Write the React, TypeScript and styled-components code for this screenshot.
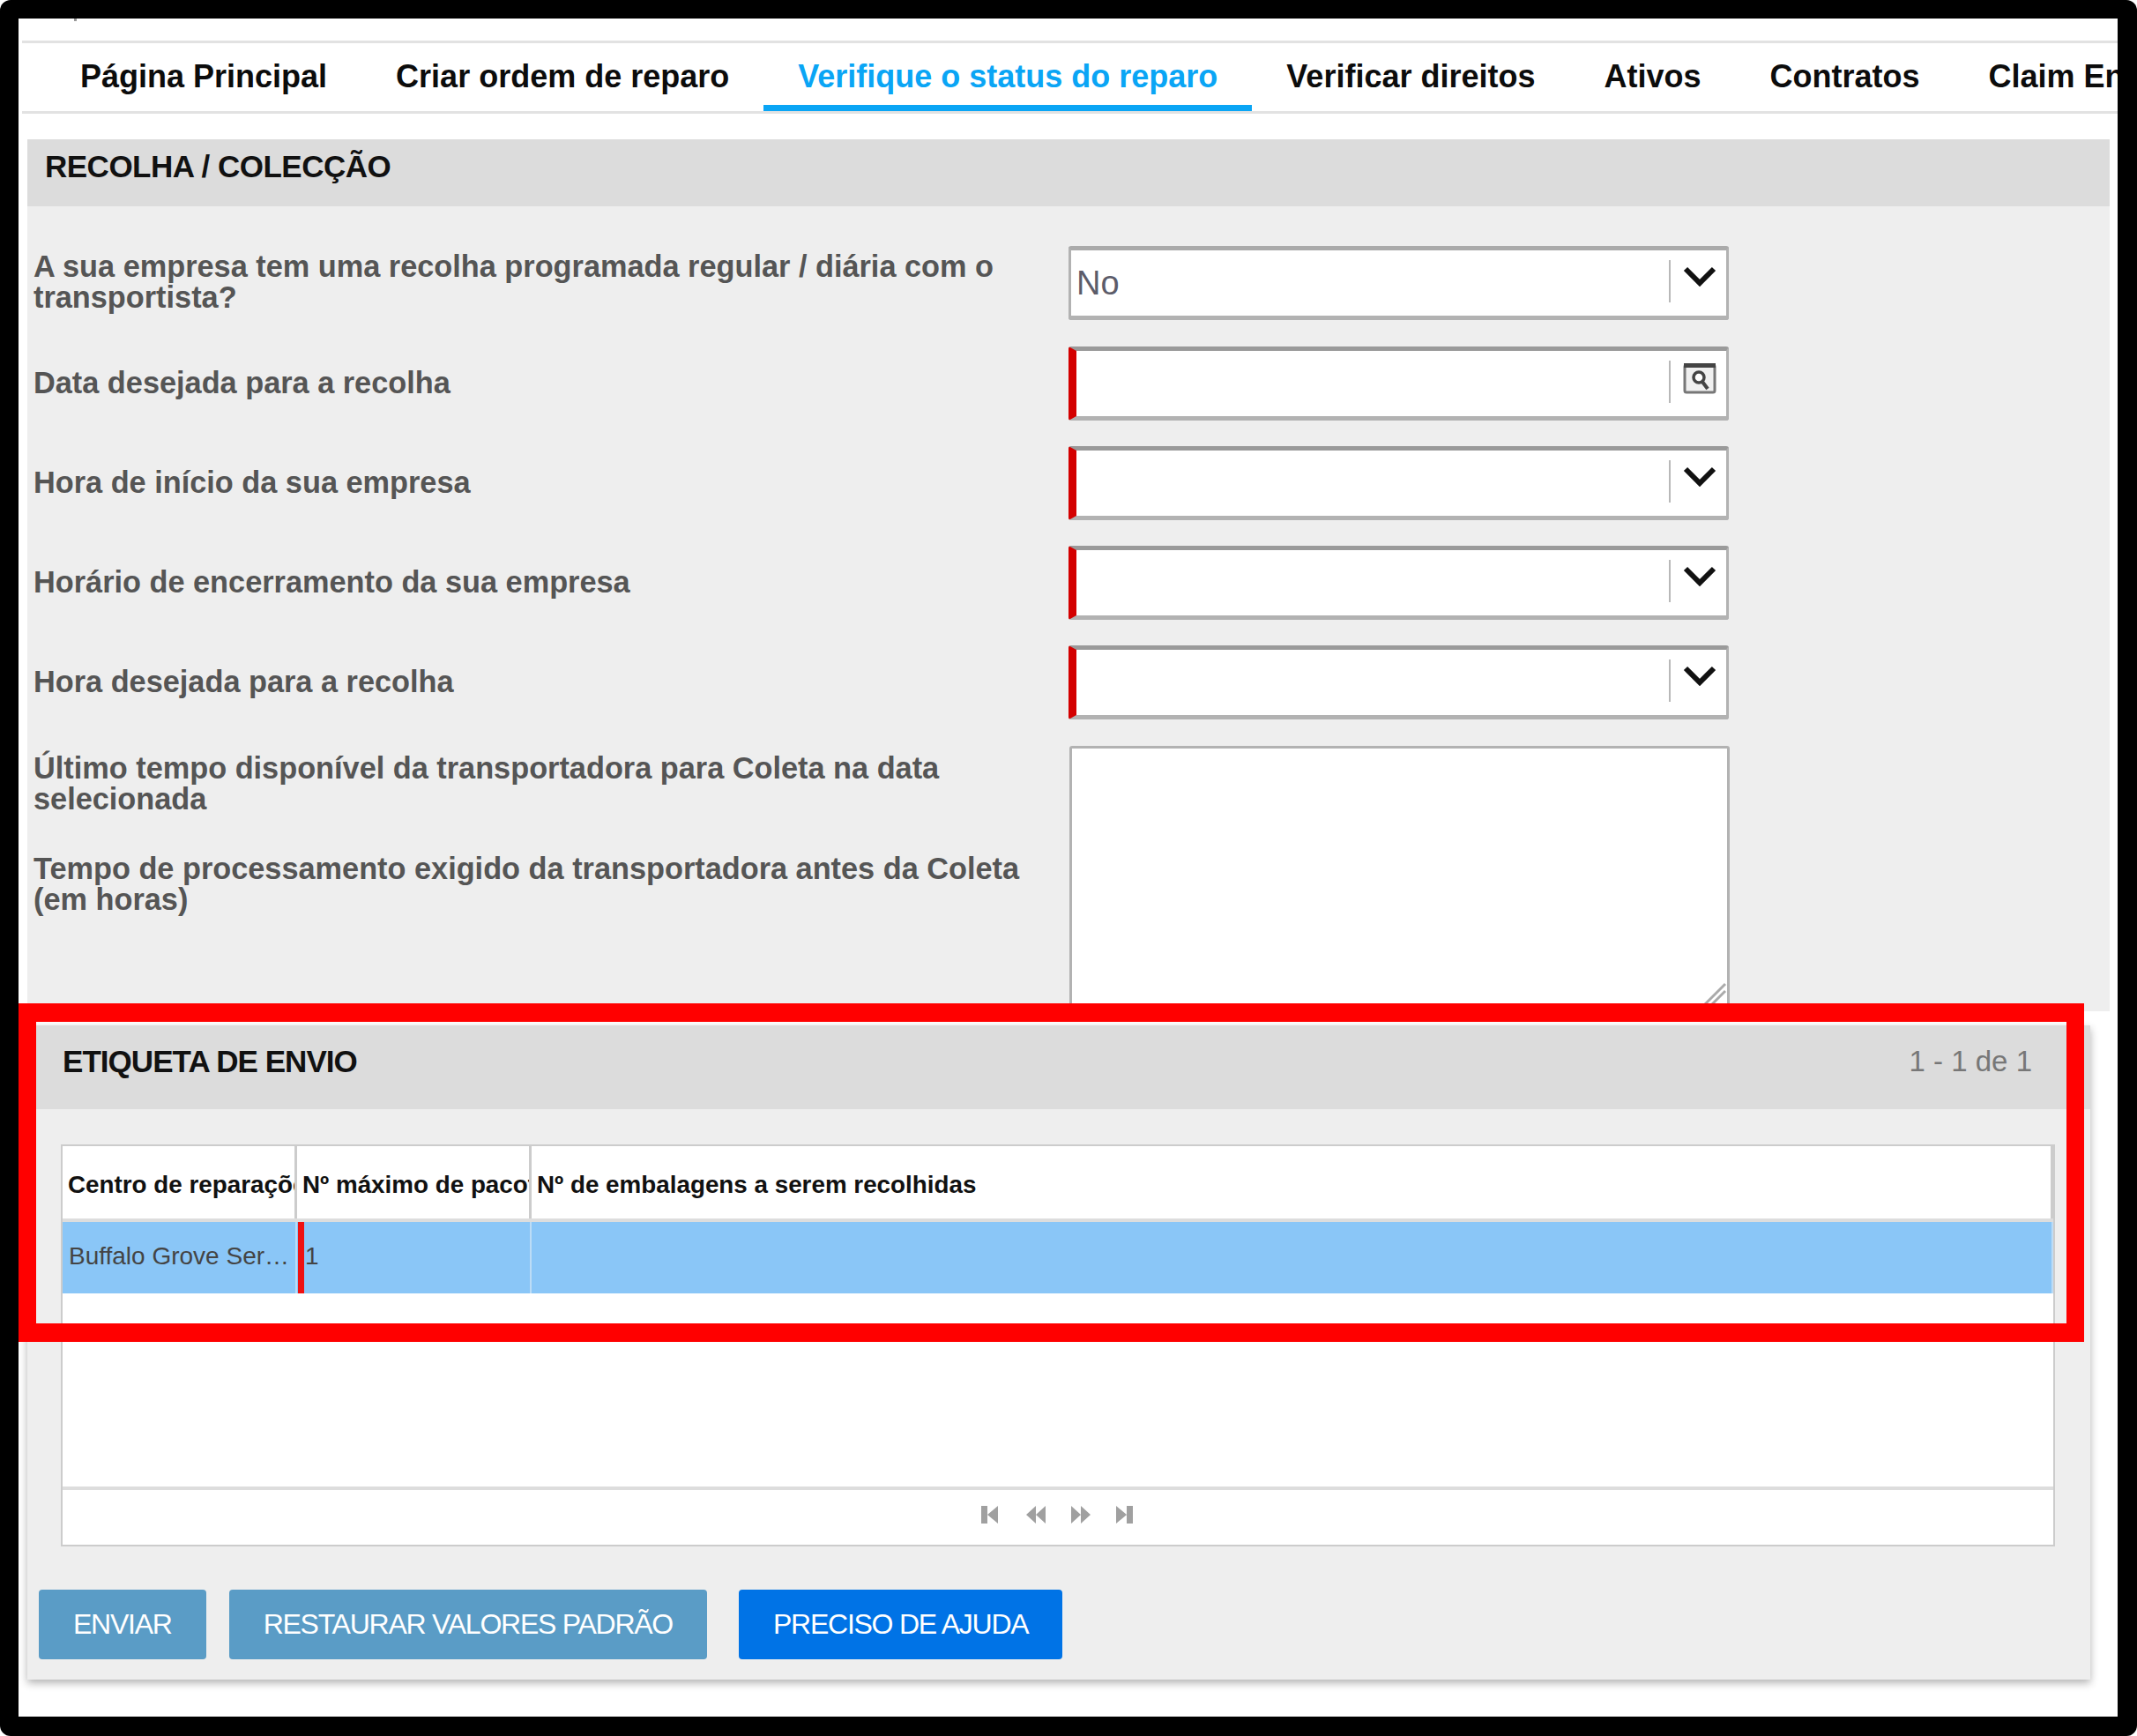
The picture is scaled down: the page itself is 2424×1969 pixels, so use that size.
import styled, { createGlobalStyle } from 'styled-components';

const tabs = [
  'Página Principal',
  'Criar ordem de reparo',
  'Verifique o status do reparo',
  'Verificar direitos',
  'Ativos',
  'Contratos',
  'Claim Entry',
];

const Chevron = () => (
  <svg width="38" height="24" viewBox="0 0 38 24">
    <path d="M3 4 L19 20 L35 4" fill="none" stroke="#111" strokeWidth="6" />
  </svg>
);

const CalendarSearch = () => (
  <CalendarSvg width="38" height="36" viewBox="0 0 38 36">
    <rect x="2" y="3" width="34" height="31" rx="2" fill="#f0f0f0" stroke="#777" strokeWidth="3" />
    <rect x="1" y="1" width="36" height="5" fill="#444" />
    <circle cx="18" cy="17" r="6" fill="#fff" stroke="#444" strokeWidth="3.5" />
    <path d="M22 22 L28 30" stroke="#444" strokeWidth="4" />
  </CalendarSvg>
);

const PagerIcon = ({ kind }: { kind: 'first' | 'prev' | 'next' | 'last' }) => {
  const paths = {
    first: 'M1 3 H8 V23 H1 Z M20 3 V23 L8 13 Z',
    prev: 'M12 3 V23 L1 13 Z M23 3 V23 L12 13 Z',
    next: 'M1 3 V23 L12 13 Z M12 3 V23 L23 13 Z',
    last: 'M1 3 V23 L13 13 Z M13 3 H20 V23 H13 Z',
  };
  return (
    <svg width="24" height="26" viewBox="0 0 24 26">
      <path d={paths[kind]} fill="#a0a0a0" />
    </svg>
  );
};

const App = () => (
  <>
    <GlobalStyle />
    <Frame>
      <Screen>
        <TinyMark />
        <Nav>
          {tabs.map((t, i) => (
            <Tab key={t} $active={i === 2}>
              {t}
            </Tab>
          ))}
        </Nav>

        <FirstSection>
          <SectionHeader>
            <SectionTitle>RECOLHA / COLECÇÃO</SectionTitle>
          </SectionHeader>
          <FormBody>
            <Row>
              <Label>A sua empresa tem uma recolha programada regular / diária com o transportista?</Label>
              <Control>
                <Value>No</Value>
                <Divider />
                <IconSlot>
                  <Chevron />
                </IconSlot>
              </Control>
            </Row>
            <Row>
              <Label>Data desejada para a recolha</Label>
              <Control $required>
                <Value />
                <Divider />
                <IconSlot>
                  <CalendarSearch />
                </IconSlot>
              </Control>
            </Row>
            <Row>
              <Label>Hora de início da sua empresa</Label>
              <Control $required>
                <Value />
                <Divider />
                <IconSlot>
                  <Chevron />
                </IconSlot>
              </Control>
            </Row>
            <Row>
              <Label>Horário de encerramento da sua empresa</Label>
              <Control $required>
                <Value />
                <Divider />
                <IconSlot>
                  <Chevron />
                </IconSlot>
              </Control>
            </Row>
            <Row>
              <Label>Hora desejada para a recolha</Label>
              <Control $required>
                <Value />
                <Divider />
                <IconSlot>
                  <Chevron />
                </IconSlot>
              </Control>
            </Row>
            <TextRow>
              <LabelStack>
                <Label>Último tempo disponível da transportadora para Coleta na data selecionada</Label>
                <Label>Tempo de processamento exigido da transportadora antes da Coleta (em horas)</Label>
              </LabelStack>
              <TextBox>
                <Grip width="30" height="30" viewBox="0 0 30 30">
                  <path d="M2 28 L28 2 M10 28 L28 10" stroke="#aaa" strokeWidth="3" />
                </Grip>
              </TextBox>
            </TextRow>
          </FormBody>
        </FirstSection>

        <SecondSection>
          <ShippingHeader>
            <ShippingTitle>ETIQUETA DE ENVIO</ShippingTitle>
            <Count>1 - 1 de 1</Count>
          </ShippingHeader>
          <DataGrid>
            <HeadRow>
              <HeadCell>Centro de reparações</HeadCell>
              <HeadCell>Nº máximo de pacotes</HeadCell>
              <HeadCell>Nº de embalagens a serem recolhidas</HeadCell>
            </HeadRow>
            <DataRow>
              <DataCell>Buffalo Grove Service Center</DataCell>
              <DataCell $required>1</DataCell>
              <DataCell />
            </DataRow>
            <EmptyArea />
            <Pager>
              <PagerIcon kind="first" />
              <PagerIcon kind="prev" />
              <PagerIcon kind="next" />
              <PagerIcon kind="last" />
            </Pager>
          </DataGrid>
          <Toolbar>
            <Button>ENVIAR</Button>
            <Button>RESTAURAR VALORES PADRÃO</Button>
            <HelpButton>PRECISO DE AJUDA</HelpButton>
          </Toolbar>
        </SecondSection>

        <Highlight />
      </Screen>
    </Frame>
  </>
);

const GlobalStyle = createGlobalStyle`
  html, body {
    margin: 0;
    padding: 0;
    background: #ffffff;
  }
  * {
    box-sizing: border-box;
  }
`;

const Frame = styled.div`
  width: 2424px;
  height: 1969px;
  padding: 21px 22px 22px 21px;
  background: #000000;
  border-radius: 12px;
  font-family: 'Liberation Sans', Arial, sans-serif;
  overflow: hidden;
`;

const Screen = styled.div`
  position: relative;
  height: 100%;
  background: #ffffff;
  overflow: hidden;
  padding-top: 25px;
  display: flex;
  flex-direction: column;
`;

const TinyMark = styled.div`
  position: absolute;
  left: 63px;
  top: 0;
  width: 3px;
  height: 3px;
  background: #999999;
`;

const Nav = styled.nav`
  display: flex;
  flex: none;
  height: 83px;
  margin-left: 4px;
  padding-left: 27px;
  border-top: 3px solid #e2e2e2;
  border-bottom: 3px solid #e2e2e2;
  overflow: hidden;
`;

const Tab = styled.div<{ $active?: boolean }>`
  flex: none;
  display: flex;
  align-items: center;
  height: 77px;
  padding: 5px 39px 0;
  font-size: 36px;
  font-weight: 700;
  white-space: nowrap;
  color: ${(p) => (p.$active ? '#0aa5f5' : '#0c0c0c')};
  border-bottom: 7px solid ${(p) => (p.$active ? '#0aa5f5' : 'transparent')};
`;

const FirstSection = styled.section`
  flex: none;
  height: 989px;
  margin: 29px 9px 0 10px;
  background: #eeeeee;
  overflow: hidden;
`;

const SectionHeader = styled.header`
  display: flex;
  align-items: center;
  justify-content: space-between;
  height: 76px;
  padding: 0 20px 15px;
  background: #dcdcdc;
`;

const SectionTitle = styled.h2`
  margin: 0;
  font-size: 35px;
  font-weight: 700;
  letter-spacing: -0.5px;
  color: #111111;
`;

const ShippingTitle = styled(SectionTitle)`
  letter-spacing: -0.95px;
`;

const FormBody = styled.div`
  padding: 45px 0 0 7px;
`;

const Row = styled.div`
  display: flex;
  align-items: center;
  height: 84px;
  margin-bottom: 29px;
  &:first-child,
  &:nth-child(5) {
    margin-bottom: 30px;
  }
`;

const Label = styled.div`
  font-size: 34.3px;
  font-weight: 700;
  line-height: 35px;
  padding-bottom: 2px;
  color: #555555;
`;

const LabelStack = styled.div`
  display: flex;
  flex-direction: column;
  gap: 42px;
  width: 1135px;
  padding-top: 8px;
`;

const Control = styled.div<{ $required?: boolean }>`
  display: flex;
  align-items: flex-start;
  flex: none;
  width: 749px;
  height: 84px;
  margin-left: auto;
  margin-right: 432px;
  background: #ffffff;
  border: 3px solid #b2b2b2;
  border-top: 5px solid ${(p) => (p.$required ? '#9a9a9a' : '#aaaaaa')};
  border-bottom-width: 5px;
  border-left: ${(p) => (p.$required ? '9px solid #d40000' : '3px solid #b2b2b2')};
  border-radius: 3px;
`;

const Value = styled.span`
  flex: 1;
  align-self: center;
  padding-left: 6px;
  font-size: 38px;
  color: #5c5c6a;
`;

const Divider = styled.span`
  flex: none;
  width: 2px;
  height: 48px;
  margin-top: 11px;
  background: #b8b8b8;
`;

const IconSlot = styled.span`
  flex: none;
  display: flex;
  justify-content: center;
  width: 38px;
  margin: 17px 11px 0 14px;
`;

const CalendarSvg = styled.svg`
  margin-top: -4px;
`;

const TextRow = styled.div`
  display: flex;
  align-items: flex-start;
`;

const TextBox = styled.div`
  position: relative;
  flex: none;
  width: 749px;
  height: 310px;
  margin-left: 40px;
  background: #ffffff;
  border: 3px solid #b2b2b2;
  border-radius: 3px;
`;

const Grip = styled.svg`
  position: absolute;
  right: 0;
  bottom: 9px;
`;

const SecondSection = styled.section`
  flex: 1;
  display: flex;
  flex-direction: column;
  margin: 16px 31px 42px 10px;
  background: #eeeeee;
  box-shadow: 0 4px 9px rgba(0, 0, 0, 0.3);
`;

const ShippingHeader = styled(SectionHeader)`
  flex: none;
  height: 95px;
  padding: 0 66px 13px 40px;
`;

const Count = styled.span`
  font-size: 33px;
  color: #777777;
`;

const DataGrid = styled.div`
  flex: 1;
  display: flex;
  flex-direction: column;
  margin: 40px 40px 0 38px;
  background: #ffffff;
  border: 2px solid #cccccc;
`;

const HeadRow = styled.div`
  flex: none;
  display: grid;
  grid-template-columns: 266px 266px 1fr;
  height: 86px;
  border-bottom: 4px solid #dddddd;
`;

const HeadCell = styled.div`
  display: flex;
  align-items: center;
  padding: 5px 0 0 6px;
  overflow: hidden;
  white-space: nowrap;
  font-size: 27.8px;
  font-weight: 700;
  color: #111111;
  border-right: 3px solid #cccccc;
`;

const DataRow = styled.div`
  flex: none;
  display: grid;
  grid-template-columns: 266px 266px 1fr;
  height: 81px;
  background: #8ac6f7;
`;

const DataCell = styled.div<{ $required?: boolean }>`
  padding-left: ${(p) => (p.$required ? '1px' : '7px')};
  line-height: 78px;
  overflow: hidden;
  white-space: nowrap;
  text-overflow: ellipsis;
  font-size: 28px;
  color: #444444;
  border-right: 2px solid #bcdcf6;
  border-left: ${(p) => (p.$required ? '7px solid #ee1111' : 'none')};
  margin-left: ${(p) => (p.$required ? '1px' : '0')};
`;

const EmptyArea = styled.div`
  flex: 1;
`;

const Pager = styled.div`
  flex: none;
  display: flex;
  justify-content: center;
  align-items: center;
  gap: 27px;
  height: 66px;
  padding-bottom: 6px;
  border-top: 4px solid #dddddd;
`;

const Toolbar = styled.div`
  flex: none;
  display: flex;
  gap: 26px;
  padding: 49px 0 23px 13px;
`;

const Button = styled.button`
  height: 79px;
  padding: 0 39px;
  border: none;
  border-radius: 4px;
  background: #5a9cc6;
  color: #ffffff;
  font-family: inherit;
  font-size: 32px;
  letter-spacing: -1.25px;
`;

const HelpButton = styled(Button)`
  margin-left: 10px;
  background: #0073e6;
`;

const Highlight = styled.div`
  position: absolute;
  left: 0;
  top: 1117px;
  width: 2343px;
  height: 384px;
  border: 21px solid #ff0000;
  border-left-width: 20px;
  border-right-width: 20px;
  pointer-events: none;
`;

export default App;
